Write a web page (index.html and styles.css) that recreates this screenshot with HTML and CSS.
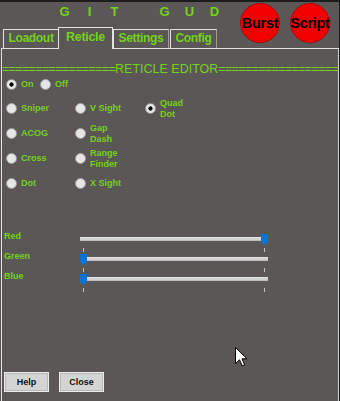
FILE: index.html
```html
<!DOCTYPE html>
<html>
<head>
<meta charset="utf-8">
<link rel="stylesheet" href="styles.css">
</head>
<body>
<div class="window">
  <div class="header">
    <div class="headleft">
      <div class="title">
        <span class="cell">G</span><span class="cell">I</span><span class="cell">T</span><span class="cell"></span><span class="cell">G</span><span class="cell">U</span><span class="cell">D</span>
      </div>
      <div class="tabs">
        <div class="tab t-loadout">Loadout</div>
        <div class="tab t-reticle active">Reticle</div>
        <div class="tab t-settings">Settings</div>
        <div class="tab t-config">Config</div>
      </div>
    </div>
    <div class="rounds">
      <div class="round">Burst</div>
      <div class="round">Script</div>
    </div>
  </div>
  <div class="panel">
    <div class="editor"><span class="eq">=================</span><span class="etitle">RETICLE EDITOR</span><span class="eq">==================</span></div>
    <div class="radios">
      <div class="onoff">
        <div class="item w-on"><span class="radio on"></span><span class="lbl">On</span></div>
        <div class="item"><span class="radio"></span><span class="lbl">Off</span></div>
      </div>
      <div class="grid">
        <div class="item"><span class="radio"></span><span class="lbl">Sniper</span></div>
        <div class="item"><span class="radio"></span><span class="lbl">V Sight</span></div>
        <div class="item"><span class="radio on"></span><span class="lbl">Quad<br>Dot</span></div>
        <div class="item"><span class="radio"></span><span class="lbl">ACOG</span></div>
        <div class="item"><span class="radio"></span><span class="lbl">Gap<br>Dash</span></div>
        <div class="empty"></div>
        <div class="item"><span class="radio"></span><span class="lbl">Cross</span></div>
        <div class="item"><span class="radio"></span><span class="lbl">Range<br>Finder</span></div>
        <div class="empty"></div>
        <div class="item"><span class="radio"></span><span class="lbl">Dot</span></div>
        <div class="item"><span class="radio"></span><span class="lbl">X Sight</span></div>
      </div>
    </div>
    <div class="sliders">
      <div class="srow">
        <span class="slbl">Red</span>
        <div class="slider"><div class="track"></div><span class="tick tl"></span><span class="tick tr"></span><span class="thumb max"></span></div>
      </div>
      <div class="srow">
        <span class="slbl">Green</span>
        <div class="slider"><div class="track"></div><span class="tick tl"></span><span class="tick tr"></span><span class="thumb"></span></div>
      </div>
      <div class="srow">
        <span class="slbl">Blue</span>
        <div class="slider"><div class="track"></div><span class="tick tl"></span><span class="tick tr"></span><span class="thumb"></span></div>
      </div>
    </div>
    <div class="buttons">
      <div class="btn">Help</div>
      <div class="btn">Close</div>
    </div>
  </div>
  <svg class="cursor" width="13" height="20" viewBox="0 0 13 20"><path d="M0.5 0.5 L0.5 16.5 L4.5 12.8 L7.2 18.8 L9.6 17.8 L7 11.8 L12 11.8 Z" fill="#fff" stroke="#000" stroke-width="1" stroke-linejoin="miter"/></svg>
</div>
</body>
</html>
```
FILE: styles.css
```css
html, body {
  margin: 0;
  padding: 0;
  background: #1c1c1c;
}
body {
  font-family: "Liberation Sans", Arial, sans-serif;
}
.window {
  position: relative;
  width: 339px;
  height: 399px;
  margin-top: 2px;
  background: #5b5756;
  display: flex;
  flex-direction: column;
}
.header {
  height: 46px;
  display: flex;
  flex-shrink: 0;
}
.headleft {
  flex: 1;
  display: flex;
  flex-direction: column;
}
.title {
  height: 25px;
  box-sizing: border-box;
  padding-left: 52px;
  padding-top: 2px;
  display: flex;
  font-size: 13px;
  line-height: 15px;
  font-weight: bold;
  color: #74d11c;
}
.cell {
  width: 25px;
  text-align: center;
}
.tabs {
  height: 21px;
  display: flex;
  align-items: flex-end;
  padding-left: 3px;
}
.tab {
  box-sizing: border-box;
  height: 19px;
  border-top: 1px solid #e2e2e2;
  border-left: 1px solid #e2e2e2;
  border-right: 1px solid #a0a0a0;
  font-size: 12px;
  font-weight: bold;
  letter-spacing: -0.3px;
  line-height: 16px;
  text-align: center;
  color: #74d11c;
  background: #5b5756;
}
.t-loadout { width: 56px; }
.t-reticle {
  width: 55px;
  margin-left: -1px;
  height: 22px;
  margin-bottom: -1px;
  line-height: 18px;
  font-size: 12.5px;
  position: relative;
  z-index: 2;
  border-right-color: #e2e2e2;
}
.t-settings { width: 56px; }
.t-config { width: 47px; margin-left: 1px; }
.rounds {
  display: flex;
  gap: 10px;
  padding-top: 1px;
  padding-right: 9px;
}
.round {
  width: 40px;
  height: 40px;
  box-sizing: border-box;
  border-radius: 50%;
  background: #f20000;
  border: 1px solid #b30000;
  display: flex;
  align-items: center;
  justify-content: center;
  font-size: 14.5px;
  font-weight: bold;
  color: #000;
  letter-spacing: -0.3px;
}
.panel {
  flex: 1;
  margin-left: 1px;
  width: 338px;
  box-sizing: border-box;
  border-top: 1px solid #e2e2e2;
  border-left: 1px solid #e2e2e2;
  border-right: 1px solid #d0d0d0;
  padding-top: 15px;
  display: flex;
  flex-direction: column;
}
.editor {
  height: 10px;
  line-height: 10px;
  font-size: 12.5px;
  color: #74d11c;
  white-space: nowrap;
  overflow: visible;
}
.eq {
  letter-spacing: -0.65px;
}
.radios {
  padding-left: 4px;
}
.onoff {
  height: 20px;
  display: flex;
  align-items: center;
}
.w-on { width: 34px; }
.grid {
  margin-top: 2px;
  display: grid;
  grid-template-columns: 69px 70px 70px;
  grid-auto-rows: 25px;
  align-items: center;
}
.item {
  display: flex;
  align-items: center;
  gap: 4px;
}
.radio {
  width: 11px;
  height: 11px;
  box-sizing: border-box;
  border-radius: 50%;
  border: 1px solid #9c9c9c;
  background: #e6e6e6;
  flex-shrink: 0;
}
.radio.on {
  background: radial-gradient(circle, #000 0, #000 1.8px, #e6e6e6 2.4px);
}
.lbl {
  font-size: 9px;
  font-weight: bold;
  line-height: 11px;
  color: #74d11c;
}
.sliders {
  margin-top: 35px;
  padding-left: 2px;
}
.srow {
  height: 20px;
  display: flex;
}
.slbl {
  width: 76px;
  font-size: 9px;
  font-weight: bold;
  line-height: 10px;
  color: #74d11c;
}
.slider {
  position: relative;
  width: 188px;
  height: 18px;
  margin-top: 2px;
}
.track {
  margin-top: 4px;
  height: 4px;
  box-sizing: border-box;
  background: #d2d2d2;
  border-top: 1px solid #e4e4e4;
  border-bottom: 1px solid #bdbdbd;
}
.tick {
  position: absolute;
  top: 15px;
  width: 1px;
  height: 4px;
  background: #c4c4c4;
}
.tl { left: 3px; }
.tr { left: 184px; }
.thumb {
  position: absolute;
  top: 1px;
  left: 0;
  width: 7px;
  height: 11px;
  background: #0a74d4;
  clip-path: polygon(0 0, 100% 0, 100% 72%, 50% 100%, 0 72%);
}
.thumb.max { left: 181px; }
.buttons {
  margin-top: auto;
  padding-left: 2px;
  padding-bottom: 9px;
  display: flex;
  gap: 10px;
}
.btn {
  width: 45px;
  height: 20px;
  box-sizing: border-box;
  background: #d4d4d4;
  border: 1px solid #ececec;
  box-shadow: inset 0 0 0 1px #b8b8b8;
  font-size: 9px;
  font-weight: bold;
  line-height: 18px;
  text-align: center;
  color: #111;
}
.cursor {
  position: absolute;
  left: 235px;
  top: 345px;
}
```
